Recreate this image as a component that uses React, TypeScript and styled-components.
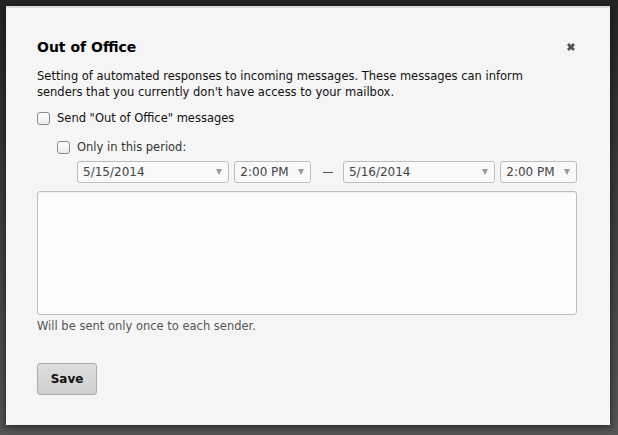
import React from "react";
import styled, { createGlobalStyle } from "styled-components";

const GlobalStyle = createGlobalStyle`
  html, body {
    margin: 0;
    padding: 0;
    background: linear-gradient(#232323 0%, #3a3a3a 40%, #555555 100%);
    height: 435px;
    overflow: hidden;
  }
`;

const Backdrop = styled.div`
  padding: 6px 8px 10px 6px;
  height: 435px;
  box-sizing: border-box;
`;

const Dialog = styled.div`
  width: 604px;
  height: 419px;
  box-sizing: border-box;
  background: #f5f5f5;
  border-top: 2px solid #dcdcdc;
  box-shadow: 0 2px 8px rgba(0, 0, 0, 0.6);
  padding: 27px 33px 0 31px;
  font-family: "DejaVu Sans", Verdana, sans-serif;
  font-size: 11.5px;
  color: #111;
`;

const Header = styled.div`
  display: flex;
  justify-content: space-between;
  align-items: center;
  height: 24px;
`;

const Title = styled.h2`
  margin: 0;
  font-size: 14px;
  font-weight: bold;
  color: #000;
`;

const CloseButton = styled.button`
  background: none;
  border: none;
  padding: 0;
  width: 12px;
  height: 12px;
  cursor: pointer;
  display: flex;
`;

const Description = styled.p`
  margin: 9px 0 0;
  line-height: 16px;
  color: #111;
`;

const Section = styled.div<{ $gap: number }>`
  margin-top: ${(p) => p.$gap}px;
`;

const CheckRow = styled.label<{ $indent?: number }>`
  display: flex;
  align-items: center;
  gap: 7px;
  margin-left: ${(p) => p.$indent ?? 0}px;
  color: ${(p) => (p.$indent ? "#333" : "#111")};
`;

const Box = styled.span`
  width: 11px;
  height: 11px;
  border: 1px solid #8a8a8a;
  border-radius: 3px;
  background: linear-gradient(#ffffff, #ececec);
  flex: none;
`;

const PeriodRow = styled.div`
  display: flex;
  align-items: center;
  margin-left: 40px;
  margin-top: 7px;
  gap: 5px;
`;

const Select = styled.div<{ $w: number }>`
  width: ${(p) => p.$w}px;
  height: 22px;
  box-sizing: border-box;
  border: 1px solid #bdbdbd;
  border-radius: 3px;
  background: #f9f9f9;
  display: flex;
  align-items: center;
  justify-content: space-between;
  padding: 0 6px 0 5px;
  color: #444;
  font-size: 12px;
`;

const Arrow = styled.span`
  width: 0;
  height: 0;
  border-left: 3px solid transparent;
  border-right: 3px solid transparent;
  border-top: 6px solid #999;
`;

const Dash = styled.span`
  width: 10px;
  height: 1px;
  background: #555;
  margin: 0 5px 0 7px;
`;

const TextArea = styled.div`
  margin-top: 8px;
  height: 124px;
  box-sizing: border-box;
  border: 1px solid #bdbdbd;
  border-radius: 3px;
  background: #fcfcfc;
  box-shadow: inset 0 1px 1px rgba(0, 0, 0, 0.05);
`;

const Hint = styled.div`
  margin-top: 4px;
  color: #555;
`;

const SaveButton = styled.button`
  margin-top: 30px;
  width: 60px;
  height: 32px;
  border: 1px solid #ababab;
  border-radius: 3px;
  background: linear-gradient(#dedede, #cfcfcf);
  font-family: "DejaVu Sans", Verdana, sans-serif;
  font-size: 12px;
  font-weight: bold;
  color: #111;
`;

const CloseIcon = () => (
  <svg width="12" height="12" viewBox="0 0 12 12">
    <path
      d="M2 4 L4 2 L6 4 L8 2 L10 4 L8 6 L10 8 L8 10 L6 8 L4 10 L2 8 L4 6 Z"
      fill="#555"
    />
  </svg>
);

const App: React.FC = () => {
  return (
    <>
      <GlobalStyle />
      <Backdrop>
        <Dialog>
          <Header>
            <Title>Out of Office</Title>
            <CloseButton aria-label="Close">
              <CloseIcon />
            </CloseButton>
          </Header>
          <Description>
            Setting of automated responses to incoming messages. These messages can inform
            <br />
            senders that you currently don't have access to your mailbox.
          </Description>
          <Section $gap={11}>
            <CheckRow>
              <Box />
              Send "Out of Office" messages
            </CheckRow>
          </Section>
          <Section $gap={15}>
            <CheckRow $indent={20}>
              <Box />
              Only in this period:
            </CheckRow>
          </Section>
          <PeriodRow>
            <Select $w={153}>
              5/15/2014
              <Arrow />
            </Select>
            <Select $w={77}>
              2:00 PM
              <Arrow />
            </Select>
            <Dash />
            <Select $w={153}>
              5/16/2014
              <Arrow />
            </Select>
            <Select $w={77}>
              2:00 PM
              <Arrow />
            </Select>
          </PeriodRow>
          <TextArea />
          <Hint>Will be sent only once to each sender.</Hint>
          <SaveButton>Save</SaveButton>
        </Dialog>
      </Backdrop>
    </>
  );
};

export default App;
